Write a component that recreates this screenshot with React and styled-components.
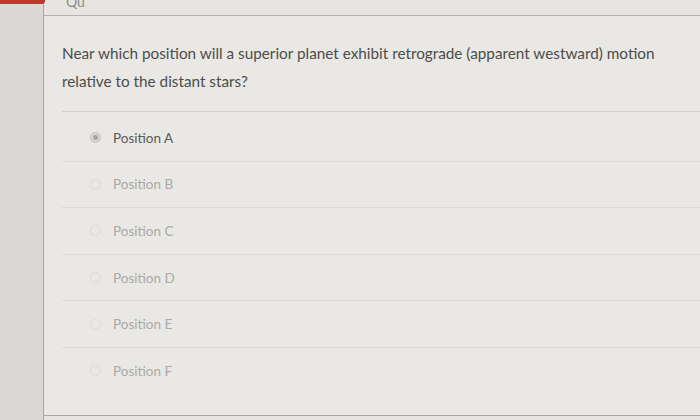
import React from "react";
import styled, { createGlobalStyle } from "styled-components";

const GlobalStyle = createGlobalStyle`
  html, body {
    margin: 0;
    padding: 0;
    width: 700px;
    height: 420px;
    overflow: hidden;
    background: #e3e2de;
    font-family: Lato, "Open Sans", sans-serif;
  }
`;

const Screen = styled.div`
  display: flex;
  width: 700px;
  height: 420px;
`;

const Sidebar = styled.div`
  position: relative;
  width: 43px;
  flex-shrink: 0;
  background: #d9d8d4;
  border-right: 1px solid #a9a8a4;
`;

const RedTab = styled.div`
  position: absolute;
  left: 0;
  top: 0;
  width: 45px;
  height: 4px;
  background: #c0392b;
  border-bottom-right-radius: 3px;
`;

const Main = styled.div`
  flex: 1;
  display: flex;
  flex-direction: column;
  background: #e6e5e1;
`;

const Header = styled.div`
  height: 15px;
  padding-left: 22px;
  font-size: 14px;
  line-height: 4px;
  color: #8a8a88;
  overflow: hidden;
`;

const Card = styled.div`
  flex: 1;
  margin-bottom: 4px;
  border-top: 1px solid #b4b3af;
  border-bottom: 1px solid #a9a8a4;
  background: #e9e8e4;
  padding: 23px 0 0 18px;
  display: flex;
  flex-direction: column;
`;

const Question = styled.div`
  font-size: 15.3px;
  line-height: 28px;
  color: #4d4d4b;
  padding-right: 20px;
  padding-bottom: 16px;
  border-bottom: 1px solid #d2d1cd;
`;

const Options = styled.div`
  display: flex;
  flex-direction: column;
  padding-top: 3px;
`;

const Option = styled.div`
  display: flex;
  align-items: center;
  gap: 12px;
  height: 45.6px;
  border-bottom: 1px solid ${(p) => (p.last ? "transparent" : "#dcdbd7")};
  padding-left: 28px;
  font-size: 13.5px;
  color: ${(p) => (p.selected ? "#5a5a58" : "#a9a9a6")};
`;

const Radio = styled.span`
  width: 9px;
  height: 9px;
  border-radius: 50%;
  border: 1px solid ${(p) => (p.selected ? "#c4c3bf" : "#dcdbd7")};
  background: ${(p) => (p.selected ? "#d6d5d1" : "transparent")};
  display: flex;
  align-items: center;
  justify-content: center;

  &::after {
    content: "";
    width: 5px;
    height: 5px;
    border-radius: 50%;
    background: ${(p) => (p.selected ? "#a8a7a3" : "transparent")};
  }
`;

const options = ["A", "B", "C", "D", "E", "F"];

export default function App() {
  return (
    <Screen>
      <GlobalStyle />
      <Sidebar>
        <RedTab />
      </Sidebar>
      <Main>
        <Header>Qu</Header>
        <Card>
          <Question>
            Near which position will a superior planet exhibit retrograde (apparent westward) motion
            relative to the distant stars?
          </Question>
          <Options>
            {options.map((o, i) => (
              <Option key={o} selected={i === 0} last={i === options.length - 1}>
                <Radio selected={i === 0} />
                Position {o}
              </Option>
            ))}
          </Options>
        </Card>
      </Main>
    </Screen>
  );
}
